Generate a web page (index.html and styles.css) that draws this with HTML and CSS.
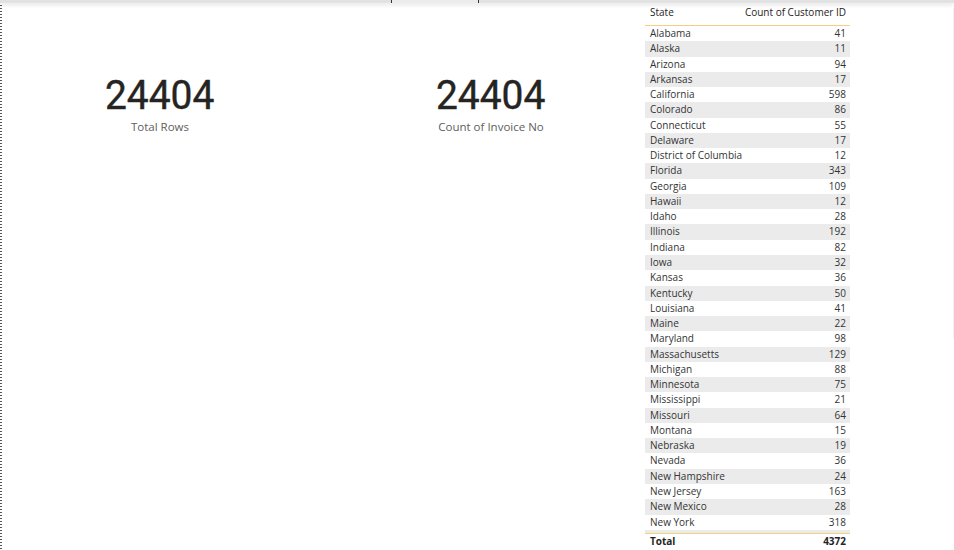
FILE: index.html
```html
<!DOCTYPE html>
<html>
<head>
<meta charset="utf-8">
<link rel="stylesheet" href="styles.css">
</head>
<body>
<div class="topbar"><div class="tab"></div></div>
<div class="canvas">
  <div class="card card-a">
    <div class="num">24404</div>
    <div class="label">Total Rows</div>
  </div>
  <div class="card card-b">
    <div class="num">24404</div>
    <div class="label">Count of Invoice No</div>
  </div>
  <div class="table">
    <div class="head"><span class="c1">State</span><span class="c2">Count of Customer ID</span></div>
    <div class="rows">
      <div class="row"><span class="c1">Alabama</span><span class="c2">41</span></div>
      <div class="row"><span class="c1">Alaska</span><span class="c2">11</span></div>
      <div class="row"><span class="c1">Arizona</span><span class="c2">94</span></div>
      <div class="row"><span class="c1">Arkansas</span><span class="c2">17</span></div>
      <div class="row"><span class="c1">California</span><span class="c2">598</span></div>
      <div class="row"><span class="c1">Colorado</span><span class="c2">86</span></div>
      <div class="row"><span class="c1">Connecticut</span><span class="c2">55</span></div>
      <div class="row"><span class="c1">Delaware</span><span class="c2">17</span></div>
      <div class="row"><span class="c1">District of Columbia</span><span class="c2">12</span></div>
      <div class="row"><span class="c1">Florida</span><span class="c2">343</span></div>
      <div class="row"><span class="c1">Georgia</span><span class="c2">109</span></div>
      <div class="row"><span class="c1">Hawaii</span><span class="c2">12</span></div>
      <div class="row"><span class="c1">Idaho</span><span class="c2">28</span></div>
      <div class="row"><span class="c1">Illinois</span><span class="c2">192</span></div>
      <div class="row"><span class="c1">Indiana</span><span class="c2">82</span></div>
      <div class="row"><span class="c1">Iowa</span><span class="c2">32</span></div>
      <div class="row"><span class="c1">Kansas</span><span class="c2">36</span></div>
      <div class="row"><span class="c1">Kentucky</span><span class="c2">50</span></div>
      <div class="row"><span class="c1">Louisiana</span><span class="c2">41</span></div>
      <div class="row"><span class="c1">Maine</span><span class="c2">22</span></div>
      <div class="row"><span class="c1">Maryland</span><span class="c2">98</span></div>
      <div class="row"><span class="c1">Massachusetts</span><span class="c2">129</span></div>
      <div class="row"><span class="c1">Michigan</span><span class="c2">88</span></div>
      <div class="row"><span class="c1">Minnesota</span><span class="c2">75</span></div>
      <div class="row"><span class="c1">Mississippi</span><span class="c2">21</span></div>
      <div class="row"><span class="c1">Missouri</span><span class="c2">64</span></div>
      <div class="row"><span class="c1">Montana</span><span class="c2">15</span></div>
      <div class="row"><span class="c1">Nebraska</span><span class="c2">19</span></div>
      <div class="row"><span class="c1">Nevada</span><span class="c2">36</span></div>
      <div class="row"><span class="c1">New Hampshire</span><span class="c2">24</span></div>
      <div class="row"><span class="c1">New Jersey</span><span class="c2">163</span></div>
      <div class="row"><span class="c1">New Mexico</span><span class="c2">28</span></div>
      <div class="row"><span class="c1">New York</span><span class="c2">318</span></div>
      <div class="row"></div>
    </div>
    <div class="total"><span class="c1">Total</span><span class="c2">4372</span></div>
  </div>
</div>
</body>
</html>
```
FILE: styles.css
```css
html, body {
  margin: 0;
  padding: 0;
  background: #fff;
}
body {
  width: 954px;
  height: 550px;
  overflow: hidden;
  font-family: "Open Sans", "Noto Sans", sans-serif;
  color: #252423;
}
.topbar {
  position: relative;
  z-index: 2;
  height: 3px;
  background: #e2e2e2;
  box-shadow: 0 2px 4px rgba(0, 0, 0, 0.12);
  display: flex;
  padding-left: 391px;
}
.tab {
  width: 86px;
  height: 3px;
  border-left: 1px solid #333;
  border-right: 1px solid #333;
  background: #ececec;
}
.canvas {
  display: flex;
  height: 547px;
  padding-left: 2px;
  background-image: repeating-linear-gradient(to bottom, #555 0 1px, transparent 1px 3px),
                    linear-gradient(to bottom, #f0f0f0, #f0f0f0);
  background-repeat: no-repeat;
  background-size: 2px 100%, 1px 330px;
  background-position: 0 2px, 953px 5px;
}
.card {
  display: flex;
  flex-direction: column;
  align-items: center;
  padding-top: 72px;
}
.card-a { width: 316px; }
.card-b { width: 306px; margin-left: 20px; }
.num {
  font-family: Roboto, sans-serif;
  font-size: 41px;
  line-height: 41px;
  color: #252423;
  transform: scaleX(0.95);
  -webkit-text-stroke: 0.4px #252423;
}
.label {
  margin-top: 4px;
  font-size: 11.5px;
  line-height: 14px;
  color: #605e5c;
}
.table {
  width: 205px;
  margin-left: 1px;
  font-size: 10px;
}
.head {
  display: flex;
  justify-content: space-between;
  padding: 2px 4px 5px 5px;
  line-height: 15px;
  border-bottom: 1px solid #f4cf7e;
}
.rows {
  height: 507px;
  overflow: hidden;
}
.row {
  display: flex;
  justify-content: space-between;
  height: 15.28px;
  line-height: 15.28px;
  padding: 0 4px 0 5px;
  color: #333;
}
.row:nth-child(even) {
  background: #ebebeb;
}
.total {
  display: flex;
  justify-content: space-between;
  border-top: 1px solid #f4cf7e;
  padding: 0 4px 0 5px;
  line-height: 14px;
  font-weight: 700;
  color: #252423;
}
.c1 { white-space: nowrap; }
.c2 { white-space: nowrap; text-align: right; }
```
